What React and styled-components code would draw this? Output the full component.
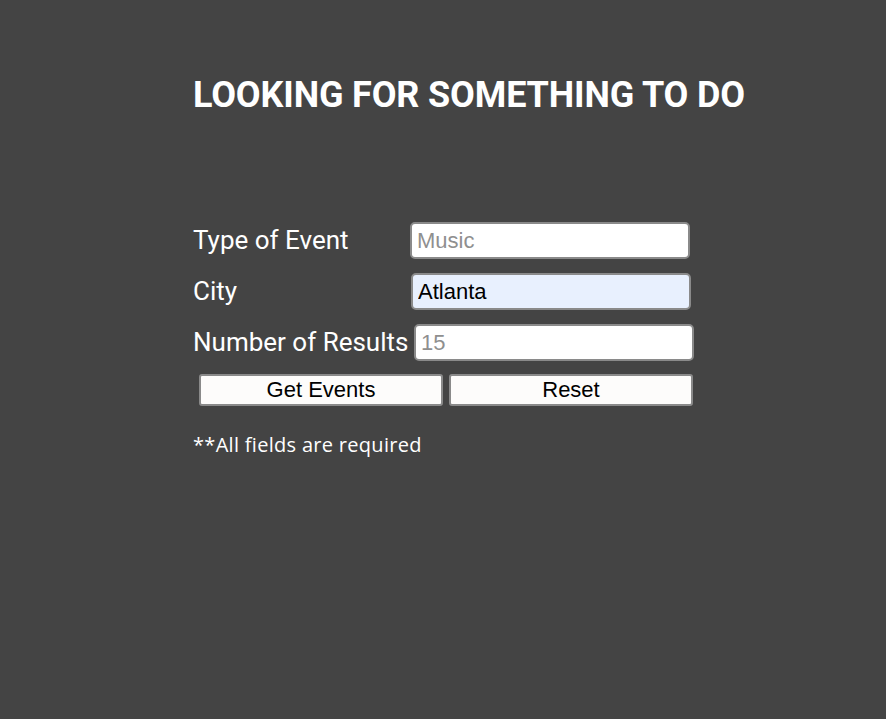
import React from 'react';
import styled, { createGlobalStyle } from 'styled-components';

const GlobalStyle = createGlobalStyle`
  body {
    margin: 0;
    background-color: #444444;
  }
`;

const Page = styled.div`
  min-height: 719px;
  background-color: #444444;
  padding: 74px 0 0 193px;
  box-sizing: border-box;
  font-family: Roboto, sans-serif;
  color: #ffffff;
`;

const Title = styled.h1`
  margin: 0;
  font-family: Roboto, sans-serif;
  font-weight: 700;
  font-size: 36px;
  line-height: 42px;
  letter-spacing: -0.15px;
`;

const Form = styled.form`
  display: flex;
  flex-direction: column;
  gap: 14px;
  margin-top: 106px;
  width: 510px;
`;

const Row = styled.div`
  display: flex;
  align-items: center;
  height: 37px;
`;

const Label = styled.label`
  font-family: Roboto, sans-serif;
  font-size: 26px;
  width: ${props => props.$width}px;
  flex: none;
  white-space: nowrap;
  margin-top: -2px;
`;

const Input = styled.input`
  box-sizing: border-box;
  width: 280px;
  height: 37px;
  border: 2px solid #8a8a8a;
  border-radius: 5px;
  padding: 0 5px;
  font-family: "Liberation Sans", Arial, sans-serif;
  font-size: 22px;
  color: #000;
  background: ${props => (props.$filled ? '#e8f0fe' : '#ffffff')};
  outline: none;

  &::placeholder {
    color: #8f8f8f;
  }
`;

const Buttons = styled.div`
  display: flex;
  gap: 6px;
  padding-left: 6px;
  margin-top: -1px;
`;

const Button = styled.button`
  box-sizing: border-box;
  width: 244px;
  height: 32px;
  border: 2px solid #8a8a8a;
  border-radius: 3px;
  background: #fdfcfb;
  font-family: "Liberation Sans", Arial, sans-serif;
  font-size: 22px;
  color: #000;
  padding: 0;
  cursor: pointer;
`;

const Note = styled.p`
  margin: 25px 0 0;
  font-family: "Open Sans", sans-serif;
  font-size: 20px;
  letter-spacing: 0.3px;
  color: #ffffff;
`;

const App = () => {
  return (
    <>
      <GlobalStyle />
      <Page>
        <Title>LOOKING FOR SOMETHING TO DO</Title>
        <Form onSubmit={e => e.preventDefault()}>
          <Row>
            <Label $width={217}>Type of Event</Label>
            <Input placeholder="Music" />
          </Row>
          <Row>
            <Label $width={218}>City</Label>
            <Input $filled defaultValue="Atlanta" />
          </Row>
          <Row>
            <Label $width={221}>Number of Results</Label>
            <Input placeholder="15" />
          </Row>
          <Buttons>
            <Button type="submit">Get Events</Button>
            <Button type="reset">Reset</Button>
          </Buttons>
        </Form>
        <Note>**All fields are required</Note>
      </Page>
    </>
  );
};

export default App;
